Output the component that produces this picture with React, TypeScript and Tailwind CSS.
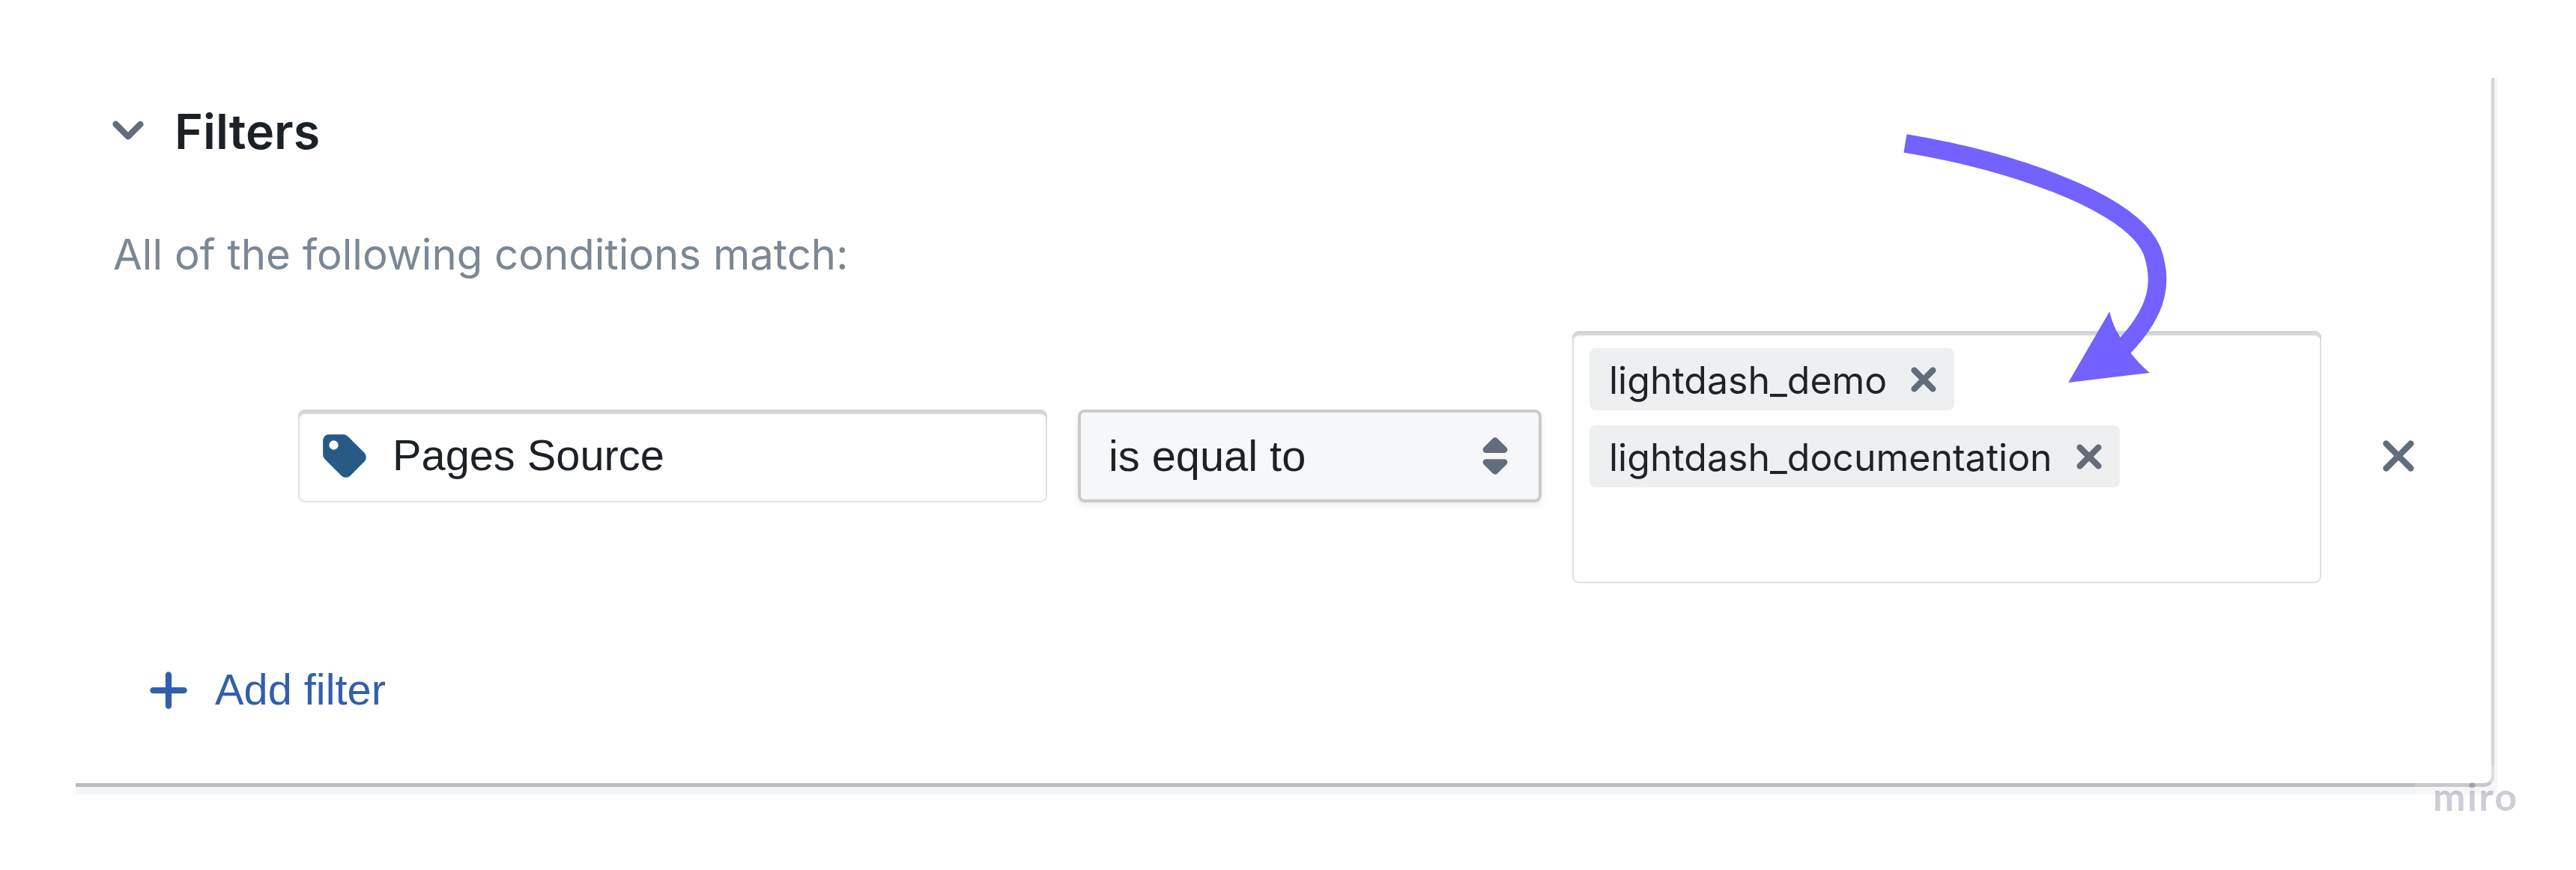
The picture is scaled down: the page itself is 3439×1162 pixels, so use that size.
const ICONS = {
  chevronDown:
    "M12 5c-.28 0-.53.11-.71.29L8 8.59l-3.29-3.3a1.003 1.003 0 00-1.42 1.42l4 4c.18.18.43.29.71.29s.53-.11.71-.29l4-4A1.003 1.003 0 0012 5z",
  tag: "M1 3a2 2 0 012-2h4.584a2 2 0 011.414.586l5.413 5.412a2 2 0 010 2.829l-4.584 4.584a2 2 0 01-2.829 0L1.586 9A2 2 0 011 7.584V3zm3.487-.007a1.494 1.494 0 100 2.988 1.494 1.494 0 000-2.988z",
  doubleCaret:
    "M5 7h6a1.003 1.003 0 00.71-1.71l-3-3C8.53 2.11 8.28 2 8 2s-.53.11-.71.29l-3 3A1.003 1.003 0 005 7zm6 2H5a1.003 1.003 0 00-.71 1.71l3 3c.18.18.43.29.71.29s.53-.11.71-.29l3-3A1.003 1.003 0 0011 9z",
  cross:
    "M9.41 8l3.29-3.29c.19-.18.3-.43.3-.71a1.003 1.003 0 00-1.71-.71L8 6.59l-3.29-3.3a1.003 1.003 0 00-1.42 1.42L6.59 8 3.3 11.29c-.19.18-.3.43-.3.71a1.003 1.003 0 001.71.71L8 9.41l3.29 3.29c.18.19.43.3.71.3a1.003 1.003 0 00.71-1.71L9.41 8z",
  smallCross:
    "M9.41 8l2.29-2.29c.19-.18.3-.43.3-.71a1.003 1.003 0 00-1.71-.71L8 6.59l-2.29-2.3a1.003 1.003 0 00-1.42 1.42L6.59 8 4.3 10.29c-.19.18-.3.43-.3.71a1.003 1.003 0 001.71.71L8 9.41l2.29 2.29c.18.19.43.3.71.3a1.003 1.003 0 00.71-1.71L9.41 8z",
  plus: "M13 7H9V3c0-.55-.45-1-1-1s-1 .45-1 1v4H3c-.55 0-1 .45-1 1s.45 1 1 1h4v4c0 .55.45 1 1 1s1-.45 1-1V9h4c.55 0 1-.45 1-1s-.45-1-1-1z",
};

function Icon({ name, className = "" }: { name: keyof typeof ICONS; className?: string }) {
  return (
    <svg viewBox="0 0 16 16" className={`size-[66px] shrink-0 ${className}`} fill="currentColor" fillRule="evenodd">
      <path d={ICONS[name]} />
    </svg>
  );
}

function Chip({ label }: { label: string }) {
  return (
    <span className="flex h-[83px] items-center rounded-[8px] bg-[#eeeff1] pr-2 pl-[26px]">
      <span className="mt-[2px] font-['Inter',sans-serif] text-[50px] leading-none whitespace-nowrap text-[#1f2328]">
        {label}
      </span>
      <button className="ml-[16px]">
        <Icon name="smallCross" className="text-[#626d7c]" />
      </button>
    </span>
  );
}

const inputBox =
  "rounded-[9px] bg-white shadow-[inset_0_6px_2px_#d3d5d9,inset_0_0_0_2px_#dfe2e6]";

export default function App() {
  return (
    <div className="relative h-[1162px] w-[3439px] overflow-hidden bg-white pt-[104px] pl-[101px] font-['Liberation_Sans',Arial,sans-serif]">
      <div className="h-[957px] w-[3233px] overflow-hidden bg-[#f4f6f8]">
        <section className="flex h-[947px] w-[3229px] flex-col rounded-br-[14px] border-r-4 border-b-[5px] border-r-[#d3d5d8] border-b-[#babcbf] bg-white">
          <header className="mt-[37px] flex h-[66px] items-center pl-[37px]">
            <Icon name="chevronDown" className="text-[#626d7c]" />
            <h2 className="mt-[4px] ml-[29px] font-['Inter',sans-serif] text-[64.6px] leading-[66px] font-semibold text-[#1c2127]">
              Filters
            </h2>
          </header>

          <p className="mt-[100px] mb-[-1px] ml-[50px] font-['Inter',sans-serif] text-[56.3px] leading-[66px] text-[#7b8795]">
            All of the following conditions match:
          </p>

          <div className="mt-[70px] ml-[297px] flex h-[337px] items-center">
            <div className={`mb-[3px] flex h-[124px] w-[1000px] items-center pl-[29px] ${inputBox}`}>
              <Icon name="tag" className="text-[#275b86]" />
              <span className="mb-[3px] ml-[31px] text-[57.75px] leading-[66px] text-[#1c2127]">Pages Source</span>
            </div>

            <div className="mb-[3px] ml-[41px] flex h-[124px] w-[619px] items-center justify-between rounded-[9px] border-4 border-[#c9cacb] bg-[#f6f7f9] pr-[25px] pl-[37px] shadow-[0_4px_8px_rgba(17,20,24,0.08)]">
              <span className="text-[57.75px] leading-[66px] text-[#1c2127]">is equal to</span>
              <Icon name="doubleCaret" className="text-[#626d7c]" />
            </div>

            <div className={`ml-[41px] flex h-[337px] w-[1000px] flex-col items-start gap-[20px] pt-[23px] pl-[23px] ${inputBox}`}>
              <Chip label="lightdash_demo" />
              <Chip label="lightdash_documentation" />
            </div>

            <button className="mb-[3px] ml-[70px]">
              <Icon name="cross" className="text-[#626d7c]" />
            </button>
          </div>

          <button className="mt-[110px] flex h-[66px] items-center pl-[91px] text-[#325fad]">
            <Icon name="plus" />
            <span className="mb-[2px] ml-[29px] text-[57.75px] leading-[66px]">Add filter</span>
          </button>
        </section>
      </div>

      <svg className="absolute top-0 left-0" width="3439" height="1162" fill="none">
        <path
          d="M2543.5 191.5C2680 214 2845 268 2873 335C2886 372 2886 412 2832 467"
          stroke="#7262ff"
          strokeWidth="24.6"
        />
        <path d="M2761.2 511L2816.3 416Q2821 436 2829.8 449.3L2844 470.7Q2854 484 2869.8 498Z" fill="#7262ff" />
      </svg>

      <div className="absolute right-0 bottom-0 flex h-[139px] w-[215px] bg-white/20 pt-[9px] pl-[24px]">
        <span className="font-['Lato',sans-serif] text-[52px] leading-[62px] font-bold tracking-[2.3px] text-[#050038]/20">miro</span>
      </div>
    </div>
  );
}
